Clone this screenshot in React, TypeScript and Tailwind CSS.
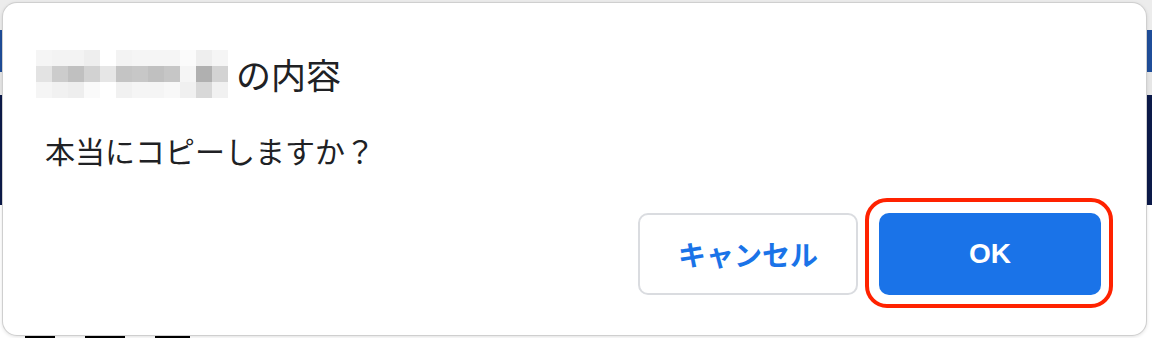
import React from 'react';

// blurred (mosaic) name in the dialog title, 3 rows x 12 cells
const mosaic: string[][] = [
  ['#f5f5f5', '#f3f3f3', '#f3f3f3', '#eeeeee', '#ffffff', '#f3f3f3', '#f5f5f5', '#f5f5f5', '#f5f5f5', '#fbfbfb', '#eeeeee', '#f5f5f5'],
  ['#e3e3e3', '#cccccc', '#c0c0c0', '#d2d2d2', '#e6e6e6', '#c4c4c4', '#c7c7c7', '#c0c0c0', '#c6c6c6', '#f5f5f5', '#b0b0b0', '#d3d3d3'],
  ['#f5f5f5', '#f1f1f1', '#eeeeee', '#fafafa', '#ffffff', '#f1f1f1', '#f5f5f5', '#f5f5f5', '#f8f8f8', '#f0f0f0', '#d8d8d8', '#f1f1f1'],
];

const jpFont = "font-['Noto_Sans_CJK_JP','Noto_Sans',sans-serif]";

export default function App() {
  return (
    <div className="relative w-[1152px] h-[338px] overflow-hidden bg-white">
      {/* page behind the dialog */}
      <div className="flex flex-col w-full h-full">
        <div className="h-[30px] bg-[#ececec]" />
        <div className="h-[42px] bg-[#1f4e9a]" />
        <div className="h-[23px] bg-[#e6e6e6]" />
        <div className="h-[110px] bg-[#0c1a4a]" />
        <div className="flex-1 bg-white flex items-end gap-[30px] pl-[25px]">
          <div className="w-[30px] h-[6px] bg-black rounded-t" />
          <div className="w-[40px] h-[6px] bg-black" />
          <div className="w-[35px] h-[6px] bg-black rounded-t" />
        </div>
      </div>

      {/* confirm dialog */}
      <div className="absolute left-[3px] top-[3px] w-[1143px] h-[332px] bg-white rounded-[14px] shadow-[0_0_0_1px_#cfcfcf,0_1px_4px_rgba(0,0,0,0.18)] flex flex-col">
        <div className="pt-[47px] pl-[33px] h-[95px] flex items-center">
          <div className="flex flex-col">
            {mosaic.map((row, i) => (
              <div key={i} className="flex">
                {row.map((c, j) => (
                  <div key={j} className="w-[16px] h-[16px]" style={{ backgroundColor: c }} />
                ))}
              </div>
            ))}
          </div>
          <span className={`${jpFont} ml-[8px] text-[35px] leading-[48px] text-[#202124]`}>の内容</span>
        </div>

        <p className={`${jpFont} mt-[34px] pl-[42px] text-[30px] leading-[36px] text-[#202124]`}>
          本当にコピーしますか？
        </p>

        <div className="flex-1" />

        <div className="flex justify-end gap-[21px] pr-[45px] pb-[40px]">
          <button className={`${jpFont} w-[220px] h-[82px] rounded-[10px] border-2 border-[#dadce0] bg-white text-[#1a73e8] text-[28px] font-bold`}>
            キャンセル
          </button>
          <div className="relative">
            <button className="w-[222px] h-[82px] rounded-[10px] bg-[#1a73e8] text-white text-[28px] font-bold font-['Liberation_Sans','Noto_Sans',sans-serif]">
              OK
            </button>
            {/* red highlight annotation */}
            <div className="absolute -left-[14px] -right-[12px] -top-[15px] -bottom-[13px] rounded-[22px] border-[4px] border-[#ff2200] pointer-events-none" />
          </div>
        </div>
      </div>
    </div>
  );
}
